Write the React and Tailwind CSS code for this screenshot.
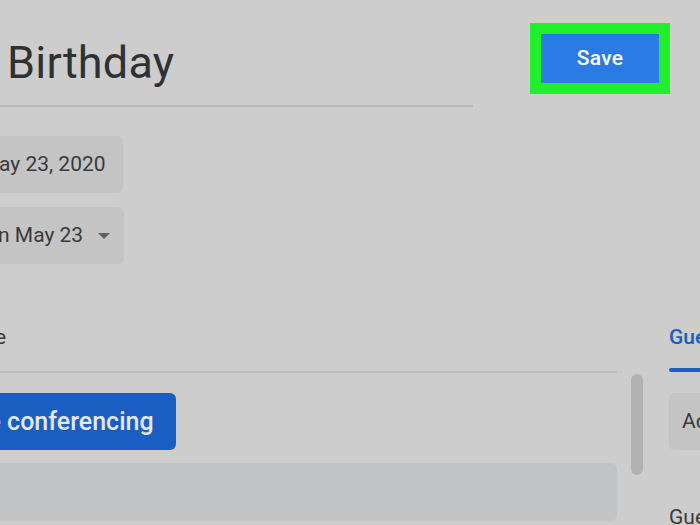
import React from "react";

const font = { fontFamily: "Roboto, 'Liberation Sans', sans-serif" };

export default function App() {
  return (
    <div
      className="w-[700px] h-[525px] overflow-hidden bg-[#cdcdcd] text-[#3a3b3d]"
      style={font}
    >
      {/* title row */}
      <div className="flex items-start">
        <div className="w-[473px] shrink-0 h-[107px] border-b-2 border-[#b8b8b8] pl-[7px] pt-[37px]">
          <div className="text-[45px] leading-[52px] text-[#2f3133] tracking-[0.2px]">Birthday</div>
        </div>
        <div className="ml-[57px] mt-[23px] border-[11px] border-[#1ff02b] shrink-0">
          <button className="w-[118px] h-[49px] bg-[#2b7be4] text-white text-[21px] font-medium tracking-[0.3px]">
            Save
          </button>
        </div>
      </div>

      {/* date chips */}
      <div className="flex flex-col items-start gap-[14px] mt-[29px]">
        <div className="w-[123px] h-[57px] bg-[#c4c4c4] rounded-r-[6px] flex items-center text-[21px] whitespace-nowrap">
          <span className="-ml-[1px]">ay 23, 2020</span>
        </div>
        <div className="w-[124px] h-[57px] bg-[#c4c4c4] rounded-r-[6px] flex items-center text-[21px] whitespace-nowrap">
          <span className="-ml-[2px]">n May 23</span>
          <span className="ml-[15px] w-0 h-0 border-l-[6px] border-r-[6px] border-t-[6px] border-l-transparent border-r-transparent border-t-[#5f6063]" />
        </div>
      </div>

      {/* lower area */}
      <div className="flex mt-[54px]">
        <div className="w-[617px] shrink-0">
          <div className="h-[55px] border-b-2 border-[#bcbcbc] pt-[3px] text-[21px] leading-[32px]">
            <span className="-ml-[5px]">e</span>
          </div>
          <button className="mt-[20px] w-[176px] h-[57px] bg-[#1a5ec4] rounded-r-[6px] flex items-center text-[25px] font-medium text-[#e3e9f2] whitespace-nowrap">
            <span className="-ml-[12.5px]">e conferencing</span>
          </button>
          <div className="mt-[13px] h-[58px] bg-[#c2c3c4] rounded-r-[6px]" />
        </div>
        <div className="ml-[14px] mt-[56px] w-[12px] h-[101px] shrink-0 rounded-full bg-[#b2b2b2]" />
        <div className="ml-[26px] w-[120px] shrink-0">
          <div className="h-[55px] pt-[3px] text-[21px] leading-[32px] font-medium text-[#1a5ec4] whitespace-nowrap">
            Guests
          </div>
          <div className="h-[4px] -mt-[5px] bg-[#1a5ec4] rounded-l-full" />
          <div className="mt-[21px] h-[57px] bg-[#c4c4c4] rounded-l-[6px] flex items-center pl-[13px] text-[21px] whitespace-nowrap">
            Add guests
          </div>
          <div className="mt-[52px] text-[21px] whitespace-nowrap">Guests</div>
        </div>
      </div>
    </div>
  );
}
